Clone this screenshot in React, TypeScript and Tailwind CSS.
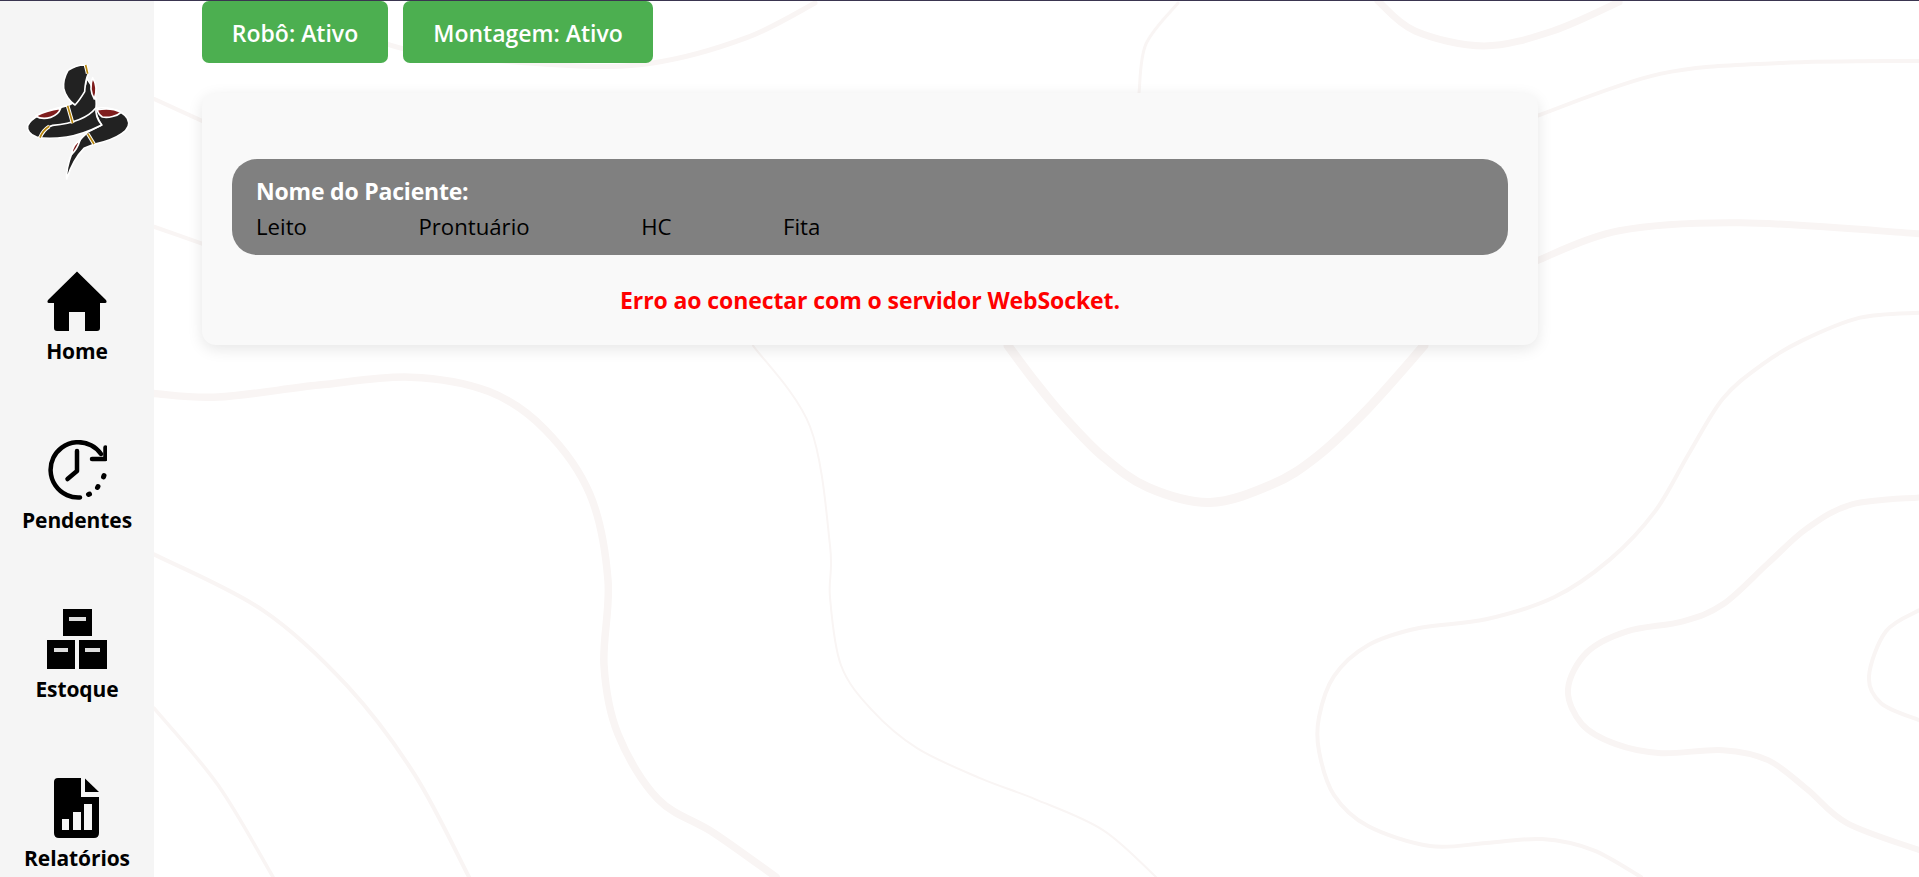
type Pt = [number, number];

// Smooth curve through measured points of the contour lines
function smooth(pts: Pt[]): string {
  let d = `M${pts[0][0]} ${pts[0][1]}`;
  for (let i = 0; i < pts.length - 1; i++) {
    const p0 = pts[Math.max(i - 1, 0)];
    const p1 = pts[i];
    const p2 = pts[i + 1];
    const p3 = pts[Math.min(i + 2, pts.length - 1)];
    const c1x = p1[0] + (p2[0] - p0[0]) / 6;
    const c1y = p1[1] + (p2[1] - p0[1]) / 6;
    const c2x = p2[0] - (p3[0] - p1[0]) / 6;
    const c2y = p2[1] - (p3[1] - p1[1]) / 6;
    d += ` C${c1x} ${c1y} ${c2x} ${c2y} ${p2[0]} ${p2[1]}`;
  }
  return d;
}

const contours: { w: number; pts: Pt[] }[] = [
  { w: 7.5, pts: [[154, 393], [218, 396.5], [319, 384.5], [410, 376.6], [489, 391], [545, 429], [590, 494], [608, 580], [604, 665], [618, 734], [658, 799], [714, 833], [776, 877]] },
  { w: 4, pts: [[154, 554], [263, 610], [347.5, 686], [415, 775], [469, 877]] },
  { w: 3.5, pts: [[154, 708], [218, 785], [273, 877]] },
  { w: 2, pts: [[753, 345], [810, 426], [830, 545], [830, 597], [841, 665], [872, 710], [917, 748], [980, 778], [1035, 799], [1103, 830], [1156, 877]] },
  { w: 9, pts: [[1008, 345], [1035, 381], [1063, 415], [1103, 456], [1148, 487], [1210, 502], [1272, 484], [1317, 456], [1368, 408], [1424, 345]] },
  { w: 4, pts: [[1919, 312], [1860, 317], [1802, 340], [1762, 364], [1723, 398], [1689, 453], [1655, 511], [1610, 559], [1554, 597], [1486, 619], [1418, 628], [1368, 645], [1334, 676], [1319, 717], [1319, 751], [1334, 795], [1368, 826], [1430, 846], [1486, 843], [1542, 839], [1593, 850], [1641, 877]] },
  { w: 6, pts: [[1919, 497], [1852, 504], [1807, 528], [1768, 563], [1723, 604], [1683, 621], [1627, 631], [1587, 652], [1568, 689], [1582, 724], [1616, 744], [1661, 753], [1723, 750], [1768, 760], [1807, 789], [1847, 823], [1919, 850]] },
  { w: 4, pts: [[1919, 610], [1886, 631], [1869, 676], [1881, 703], [1919, 720]] },
  { w: 5, pts: [[815, 2], [746, 37], [653, 62], [560, 64], [400, 47], [340, 10]] },
  { w: 3, pts: [[1178, 2], [1146, 43], [1139, 92]] },
  { w: 7, pts: [[1378, 0], [1415, 30], [1484, 45], [1553, 30], [1619, 1]] },
  { w: 4, pts: [[1537, 115], [1660, 73], [1782, 62], [1919, 60]] },
  { w: 7, pts: [[1537, 260], [1619, 230], [1741, 222], [1919, 233]] },
  { w: 4, pts: [[154, 98], [202, 120]] },
  { w: 4, pts: [[154, 226], [202, 243]] },
];

function Background() {
  return (
    <svg className="absolute inset-0 h-full w-full" viewBox="0 0 1919 877" preserveAspectRatio="none" fill="none" stroke="#f9f5f4" strokeLinecap="round">
      {contours.map((c, i) => (
        <path key={i} strokeWidth={c.w} d={smooth(c.pts)} />
      ))}
    </svg>
  );
}

function Stripe({ d }: { d: string }) {
  return (
    <>
      <path fill="none" stroke="#ffffff" strokeWidth="11" d={d} />
      <path fill="none" stroke="#b8860b" strokeWidth="5" d={d} />
    </>
  );
}

function Logo() {
  return (
    <svg width="120" height="130" viewBox="0 0 360 390" stroke="#ffffff" strokeWidth="5" strokeLinejoin="round">
      {/* right coil and tail */}
      <path fill="#222222" d="M226 160 C260 156 305 162 322 190 C330 205 326 222 305 236 C285 250 250 262 222 268 L192 280 C172 300 152 335 140 372 C138 345 146 320 155 296 C162 275 180 252 205 230 L245 210 C235 195 225 180 226 160 Z" />
      <path fill="#7f1d1d" d="M232 164 C255 160 285 162 303 172 C292 183 265 190 247 186 C238 180 233 172 232 164 Z" />
      <path fill="#7f1d1d" d="M180 256 C174 275 166 288 155 298 C156 280 166 264 180 256 Z" />
      <Stripe d="M203 236 L222 267" />
      {/* neck, left coil and lower band */}
      <path fill="#222222" d="M200 70 C220 95 232 130 228 158 C226 178 235 198 245 210 C215 225 180 240 140 246 C110 250 75 252 50 246 C30 240 20 225 23 212 C32 190 70 170 130 155 C160 150 195 120 200 70 Z" />
      <path fill="none" d="M60 248 C68 228 80 215 98 211 C130 208 195 200 228 158" />
      <path fill="#7f1d1d" d="M47 183 C70 170 100 163 122 160 C118 172 108 182 92 187 C75 192 58 190 47 183 Z" />
      <Stripe d="M143 152 L158 205" />
      <Stripe d="M88 214 C75 222 65 235 60 248" />
      {/* head */}
      <path fill="#222222" d="M144 46 C160 36 180 30 193 30 C198 40 203 48 205 56 C198 72 195 90 194 110 C185 125 175 140 165 150 C150 140 135 120 131 100 C129 80 136 60 144 46 Z" />
      <path fill="#7f1d1d" d="M218 68 C228 85 231 110 223 132 C213 115 210 90 218 68 Z" />
      <Stripe d="M197 30 L203 56" />
    </svg>
  );
}

function HomeIcon() {
  return (
    <svg width="60" height="60" viewBox="0 0 60 60" fill="#000000">
      <path d="M30 0.5 L59 29 Q60.5 32 58 32 L53 32 L53 57 Q53 60 50 60 L38 60 L38 41 L22 41 L22 60 L10 60 Q7 60 7 57 L7 32 L2 32 Q-0.5 32 1 29 Z" />
    </svg>
  );
}

function ClockIcon() {
  return (
    <svg width="60" height="60" viewBox="47 440 60 60" fill="none" stroke="#000000" strokeWidth="4.5" strokeLinecap="round" strokeLinejoin="round">
      <path d="M80 497.5 A27.7 27.7 0 1 1 101 454" />
      <path d="M105.5 447.5 L105.5 459 L92 459" />
      <path d="M77 451 L77 471 L67.5 479" />
      <path strokeWidth="5" d="M104 475.5 L103.5 477" />
      <path strokeWidth="5" d="M98 486.5 L97.5 487.5" />
      <path strokeWidth="5" d="M89.5 494 L88.5 494.5" />
    </svg>
  );
}

function BoxesIcon() {
  return (
    <svg width="60" height="60" viewBox="47 609 60 60">
      <rect x="63" y="609" width="29" height="27" fill="#000000" />
      <rect x="47" y="640" width="28" height="29" fill="#000000" />
      <rect x="79" y="640" width="28" height="29" fill="#000000" />
      <rect x="69" y="617" width="17" height="4" fill="#dddddd" />
      <rect x="54" y="648" width="14" height="4" fill="#dddddd" />
      <rect x="85" y="648" width="15" height="4" fill="#dddddd" />
    </svg>
  );
}

function ReportIcon() {
  return (
    <svg width="60" height="60" viewBox="47 777 60 60">
      <path fill="#000000" d="M58 777 L81 777 L81 796 L99 796 L99 832 Q99 837 94 837 L59 837 Q54 837 54 832 L54 781 Q54 777 58 777 Z" />
      <path fill="#000000" d="M85 777.5 L99 791 L85 791 Z" />
      <rect x="62" y="818" width="7" height="11" fill="#f5f5f5" />
      <rect x="73" y="811" width="8" height="18" fill="#f5f5f5" />
      <rect x="84" y="803" width="8" height="26" fill="#f5f5f5" />
    </svg>
  );
}

function NavItem({ icon, label }: { icon: React.ReactNode; label: string }) {
  return (
    <div className="flex h-[169px] w-full shrink-0 flex-col items-center">
      {icon}
      <span className="mt-[7px] text-[21px] leading-[26px] font-bold tracking-[-0.1px] text-black">{label}</span>
    </div>
  );
}

export default function App() {
  return (
    <div className="relative flex h-screen overflow-hidden border-t border-[#3a3550] bg-white font-['Open_Sans','Noto_Sans',sans-serif]">
      <Background />
      <aside className="relative flex w-[154px] shrink-0 flex-col items-center bg-[#f5f5f5]">
        <div className="h-[270px] w-full shrink-0 pt-[54px] pl-[20px]">
          <Logo />
        </div>
        <NavItem icon={<HomeIcon />} label="Home" />
        <NavItem icon={<ClockIcon />} label="Pendentes" />
        <NavItem icon={<BoxesIcon />} label="Estoque" />
        <NavItem icon={<ReportIcon />} label="Relatórios" />
      </aside>
      <main className="relative ml-[48px] flex w-[1336px] flex-col">
        <div className="flex gap-[15px]">
          <div className="flex h-[62px] w-[186px] items-center justify-center rounded-[7px] bg-[#4caf50] pt-[2px] text-[23px] font-semibold text-white">Robô: Ativo</div>
          <div className="flex h-[62px] w-[250px] items-center justify-center rounded-[7px] bg-[#4caf50] pt-[2px] text-[23px] font-semibold text-white">Montagem: Ativo</div>
        </div>
        <section className="mt-[30px] h-[252px] rounded-[14px] bg-[#f9f9f9] px-[30px] pt-[66px] shadow-[0_4px_15px_rgba(0,0,0,0.1)]">
          <div className="h-[96px] rounded-[25px] bg-[#808080] px-[24px] pt-[15px]">
            <div className="text-[23px] leading-[35px] font-bold tracking-[-0.2px] text-white">Nome do Paciente:</div>
            <div className="flex gap-[111.5px] text-[22.2px] leading-[35px] text-black">
              <span>Leito</span>
              <span>Prontuário</span>
              <span>HC</span>
              <span>Fita</span>
            </div>
          </div>
          <p className="mt-[30px] text-center text-[23px] leading-[30px] font-bold tracking-[-0.1px] text-[#ff0000]">Erro ao conectar com o servidor WebSocket.</p>
        </section>
      </main>
    </div>
  );
}
